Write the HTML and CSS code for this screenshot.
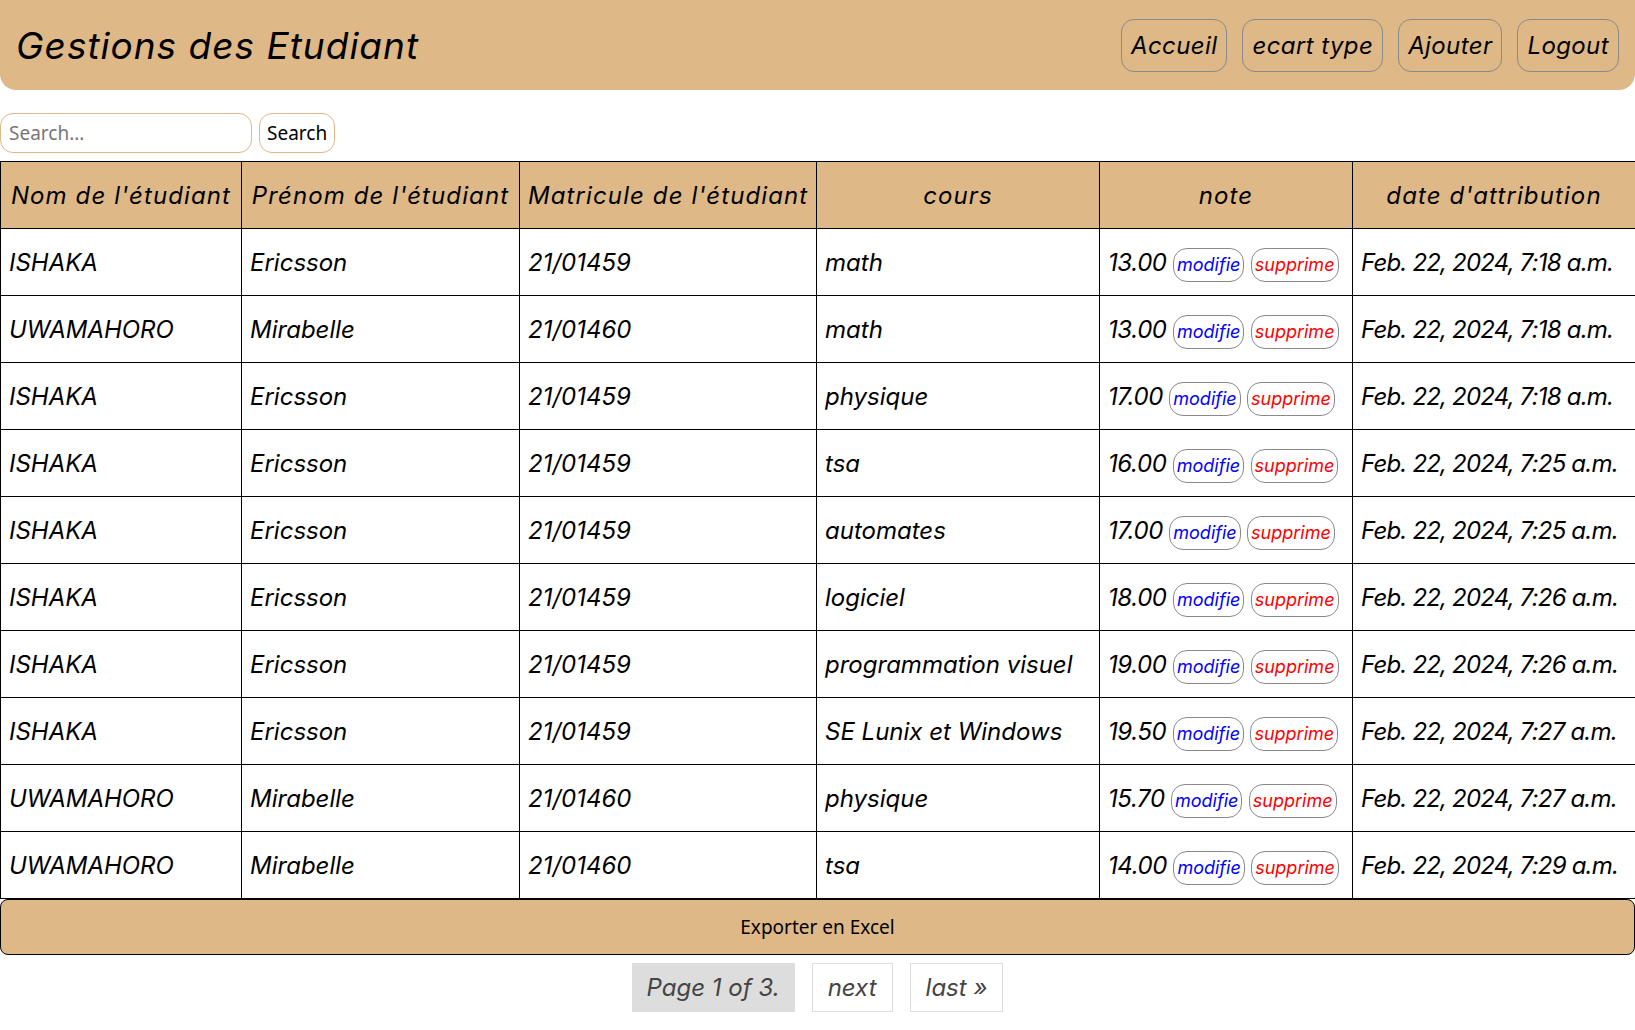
FILE: index.html
```html
<!DOCTYPE html>
<html lang="fr">
<head>
<meta charset="utf-8">
<title>Gestions des Etudiant</title>
<link rel="stylesheet" href="styles.css">
</head>
<body>
<header class="topbar">
  <h1 class="title">Gestions des Etudiant</h1>
  <nav class="nav">
    <a class="nav-btn" href="#">Accueil</a>
    <a class="nav-btn" href="#">ecart type</a>
    <a class="nav-btn" href="#">Ajouter</a>
    <a class="nav-btn" href="#">Logout</a>
  </nav>
</header>

<form class="search">
  <input class="search-input" type="text" placeholder="Search...">
  <button class="search-btn" type="button">Search</button>
</form>

<table class="grid">
  <colgroup>
    <col class="c1"><col class="c2"><col class="c3"><col class="c4"><col class="c5"><col class="c6">
  </colgroup>
  <thead>
    <tr>
      <th>Nom de l'étudiant</th>
      <th>Prénom de l'étudiant</th>
      <th>Matricule de l'étudiant</th>
      <th>cours</th>
      <th>note</th>
      <th>date d'attribution</th>
    </tr>
  </thead>
  <tbody>
    <tr><td>ISHAKA</td><td>Ericsson</td><td>21/01459</td><td>math</td><td class="note">13.00 <a class="act mod" href="#">modifie</a> <a class="act sup" href="#">supprime</a></td><td class="date">Feb. 22, 2024, 7:18 a.m.</td></tr>
    <tr><td>UWAMAHORO</td><td>Mirabelle</td><td>21/01460</td><td>math</td><td class="note">13.00 <a class="act mod" href="#">modifie</a> <a class="act sup" href="#">supprime</a></td><td class="date">Feb. 22, 2024, 7:18 a.m.</td></tr>
    <tr><td>ISHAKA</td><td>Ericsson</td><td>21/01459</td><td>physique</td><td class="note">17.00 <a class="act mod" href="#">modifie</a> <a class="act sup" href="#">supprime</a></td><td class="date">Feb. 22, 2024, 7:18 a.m.</td></tr>
    <tr><td>ISHAKA</td><td>Ericsson</td><td>21/01459</td><td>tsa</td><td class="note">16.00 <a class="act mod" href="#">modifie</a> <a class="act sup" href="#">supprime</a></td><td class="date">Feb. 22, 2024, 7:25 a.m.</td></tr>
    <tr><td>ISHAKA</td><td>Ericsson</td><td>21/01459</td><td>automates</td><td class="note">17.00 <a class="act mod" href="#">modifie</a> <a class="act sup" href="#">supprime</a></td><td class="date">Feb. 22, 2024, 7:25 a.m.</td></tr>
    <tr><td>ISHAKA</td><td>Ericsson</td><td>21/01459</td><td>logiciel</td><td class="note">18.00 <a class="act mod" href="#">modifie</a> <a class="act sup" href="#">supprime</a></td><td class="date">Feb. 22, 2024, 7:26 a.m.</td></tr>
    <tr><td>ISHAKA</td><td>Ericsson</td><td>21/01459</td><td>programmation visuel</td><td class="note">19.00 <a class="act mod" href="#">modifie</a> <a class="act sup" href="#">supprime</a></td><td class="date">Feb. 22, 2024, 7:26 a.m.</td></tr>
    <tr><td>ISHAKA</td><td>Ericsson</td><td>21/01459</td><td>SE Lunix et Windows</td><td class="note">19.50 <a class="act mod" href="#">modifie</a> <a class="act sup" href="#">supprime</a></td><td class="date">Feb. 22, 2024, 7:27 a.m.</td></tr>
    <tr><td>UWAMAHORO</td><td>Mirabelle</td><td>21/01460</td><td>physique</td><td class="note">15.70 <a class="act mod" href="#">modifie</a> <a class="act sup" href="#">supprime</a></td><td class="date">Feb. 22, 2024, 7:27 a.m.</td></tr>
    <tr><td>UWAMAHORO</td><td>Mirabelle</td><td>21/01460</td><td>tsa</td><td class="note">14.00 <a class="act mod" href="#">modifie</a> <a class="act sup" href="#">supprime</a></td><td class="date">Feb. 22, 2024, 7:29 a.m.</td></tr>
  </tbody>
</table>

<button class="export" type="button">Exporter en Excel</button>

<div class="pager">
  <span class="page-current">Page 1 of 3.</span>
  <a class="page-link" href="#">next</a>
  <a class="page-link" href="#">last »</a>
</div>
</body>
</html>
```

FILE: styles.css
```css
* { box-sizing: border-box; }

body {
  margin: 0;
  font-family: Inter, "Noto Sans", sans-serif;
  font-style: italic;
  color: #000;
  background: #fff;
}

.topbar {
  height: 90px;
  background: #deb887;
  display: flex;
  align-items: center;
  justify-content: space-between;
  padding: 0 16px 0 16px;
  border-radius: 0 0 16px 16px;
}

.title {
  margin: 0;
  font-size: 37px;
  font-weight: 400;
  font-style: italic;
  letter-spacing: 1px;
}

.nav {
  display: flex;
  gap: 15px;
}

.nav-btn {
  display: flex;
  align-items: center;
  height: 53px;
  padding: 0 9px;
  border: 1px solid #8a8a8a;
  border-radius: 13px;
  color: #000;
  text-decoration: none;
  font-size: 24px;
  letter-spacing: 0.4px;
}

.search {
  display: flex;
  gap: 7px;
  margin: 23px 0 8px;
}

.search-input {
  width: 252px;
  height: 40px;
  border: 1px solid #deb887;
  border-radius: 13px;
  padding: 0 8px;
  font-family: "Noto Sans", sans-serif;
  font-style: normal;
  font-size: 19px;
  color: #000;
  outline: none;
}

.search-input::placeholder { color: #777; }

.search-btn {
  height: 40px;
  padding: 0 7px;
  background: #fff;
  border: 1px solid #deb887;
  border-radius: 13px;
  font-family: "Noto Sans", sans-serif;
  font-size: 19px;
  color: #000;
}

.grid {
  width: 100%;
  border-collapse: collapse;
  table-layout: fixed;
}

.c1 { width: 241px; }
.c2 { width: 278px; }
.c3 { width: 297px; }
.c4 { width: 283px; }
.c5 { width: 253px; }
.c6 { width: 283px; }

.grid th,
.grid td {
  border: 1px solid #000;
  height: 67px;
  padding: 0 8px;
  font-size: 24px;
  font-weight: 400;
  font-style: italic;
  white-space: nowrap;
  overflow: hidden;
}

.grid th {
  background: #deb887;
  text-align: center;
  letter-spacing: 1.1px;
}

.grid td { text-align: left; }

.grid td.note { letter-spacing: -0.4px; }

.grid td.date { letter-spacing: -0.8px; }

.act {
  display: inline-block;
  font-size: 18px;
  padding: 4px 3px;
  margin: -8px 0;
  border: 1px solid #8a8a8a;
  border-radius: 14px;
  text-decoration: none;
  vertical-align: baseline;
  line-height: 24px;
  letter-spacing: 0;
}

.mod { color: #0000ff; }
.sup { color: #ff0000; }

.export {
  display: block;
  width: 100%;
  height: 56px;
  margin: 0;
  background: #deb887;
  border: 1px solid #000;
  border-radius: 8px;
  font-family: "Noto Sans", sans-serif;
  font-style: normal;
  font-size: 19px;
  color: #000;
}

.pager {
  display: flex;
  justify-content: center;
  gap: 17px;
  margin-top: 8px;
}

.page-current,
.page-link {
  display: flex;
  align-items: center;
  height: 49px;
  padding: 0 15px;
  font-size: 24px;
  color: #444;
  text-decoration: none;
}

.page-current { background: #dddddd; }

.page-link { border: 1px solid #dddddd; }
```
